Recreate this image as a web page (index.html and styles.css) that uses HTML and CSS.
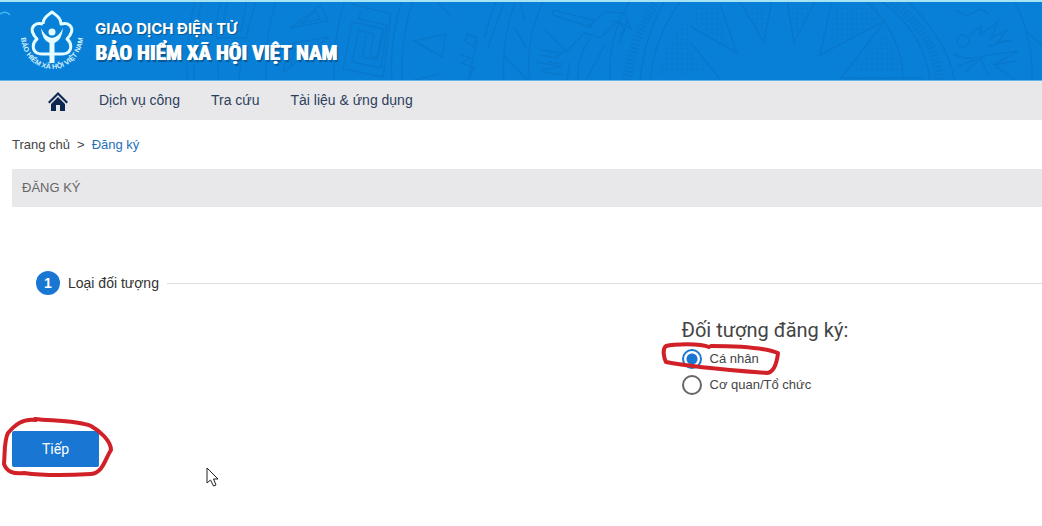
FILE: index.html
```html
<!DOCTYPE html>
<html lang="vi">
<head>
    <meta charset="UTF-8">
    <meta name="viewport" content="width=device-width, initial-scale=1.0">
    <title>Đăng ký - Bảo hiểm xã hội Việt Nam</title>
    <link rel="stylesheet" href="styles.css">
</head>
<body>

<!-- Banner -->
<header class="banner">
    <!-- Hoa văn trống đồng -->
    <svg class="banner-pattern" viewBox="0 0 1042 78" preserveAspectRatio="xMinYMin slice" aria-hidden="true">
        <defs>
            <pattern id="dots" width="5" height="5" patternUnits="userSpaceOnUse">
                <circle cx="2" cy="2" r="1.4"/>
            </pattern>
        </defs>
        <path class="wave" d="M0 12q6-4 10 1"/>
        <g class="lines">
            <path d="M195-2q-10 40-8 82M202-2q-10 40-8 82M222-2q-8 20-5 38h29q4-16 10-38M228-2q-5 18-4 31h17q2-12 6-31M219 46q-2 18 0 34M224 46h18l-3 34M276-2q-12 40-10 82M290 26l31-23 7 16zM300 22l16-13 4 8zM283 70l6-28 40-7zM290 65l5-18 22-4zM345-2q-13 40-11 82"/>
            <path d="M352 2l39 10-8 63-40-8 9-47 31 7-7 31-14-3 4-21M361 10l-3 7 29 6-6 43-29-6 7-32 15 4-4 22 8 2 6-29-30-7"/>
            <path d="M402-2q-13 40-10 82M413-2q-13 40-11 82M414 39l32-7-4 23zM436-2l15 17M414 78l25-6M478 38q-7 20-9 42M505-2l-17 47M496-2l-12 38M515 0q-14 40-11 80M514 25l13 22M505 55l23 24M520 0l5 20"/>
            <path d="M544-2q-20 40-14 82M553 8l40 10-2 7-38-12zM545 28l21 22 18-19 17 5 16-17 14 8-6-16-20-1-18 15M590 36q-14 22-12 44M548 60l15 2M542 70l21 3M570 60l-3 18M605 42l-18 35M612 19q18 5 8 15M628 18l-9 24"/>
            <path d="M631-2q-24 36-21 82M665-2q-22 40-25 82M682-2q-28 36-32 82M690 24l47 27-17-49M690 40l30 37M739-2l25 42 8-42M787-2l7 42 22-42M832-2l-12 55 66-35M882 23l-41 53h82M865-2q38 34 38 82M880-2q46 34 50 82M906-2q42 40 49 82M1014-2q20 40 18 82M1025 28l17 15"/>
            <circle cx="963" cy="39" r="6"/>
            <path d="M969 34l12-10-1 9 18-14-7 17 16-8-9 12 14-2-24 6M953 52q16 8 35 1l30-4-24 14 22-4M955 8l12 6 14-7 8 5M957 64l18-6M966 70l14-14 10 20M990 60l25 18"/>
            <path d="M467 32l10 4-4 9-8-6zM460 52l10 4-8 5 12 5-6 12M541 48l20 3-4 5-17-3M537 60l24 5-20 3"/>
        </g>
        <g class="bands">
            <path d="M655 2q-23 35-28 78M892 0q44 33 48 80"/>
        </g>
        <path fill="url(#dots)" opacity=".5" d="M694 2h25l8 40-35-21zM742 2h24l-3 31zM791 2h22l-18 30zM836 2h38l8 14-54 30zM884 30q16 20 18 41h-50zM690 48l15 22h-15zM674 30l16-15v57h-34z"/>
    </svg>

    <a href="#" class="brand">
        <svg class="logo" viewBox="0 0 64 66" role="img" aria-label="Bảo hiểm xã hội Việt Nam">
            <defs><path id="ring" d="M1 26A31 33 0 0 0 63 26"/></defs>
            <path class="flower" d="M23 14C23 8 27 6 32 2C37 6 41 8 41 14C49 12 53 17 51.500 22C50.500 25.500 49 27 47 29C52 33 52 40 47 43C44 44.500 40 44 34 44M23 14C15 12 11 17 12.500 22C13.500 25.500 15 27 17 29C12 33 12 40 17 43C20 44.500 24 44 30 44"/>
            <path class="figure" d="M21 18Q22 30 29.500 33V53H34.500V33Q42 30 43 18Q39 27 32 28Q25 27 21 18Z"/>
            <circle class="figure" cx="32" cy="22" r="3.500"/>
            <text class="ring-text"><textPath href="#ring" startOffset="50%">BẢO HIỂM XÃ HỘI VIỆT NAM</textPath></text>
        </svg>
        <span class="brand-text">
            <span class="brand-small">GIAO DỊCH ĐIỆN TỬ</span>
            <span class="brand-large">BẢO HIỂM XÃ HỘI VIỆT NAM</span>
        </span>
    </a>
</header>

<!-- Menu chính -->
<nav class="main-nav">
    <a href="#" class="home" aria-label="Trang chủ">
        <svg viewBox="0 0 20 19" width="20" height="19">
            <path d="M0 10L10 0L20 10L18.500 11.500L10 3L1.500 11.500Z"/>
            <path d="M3 12L10 5L17 12V19H12V13H8V19H3Z"/>
        </svg>
    </a>
    <a href="#">Dịch vụ công</a>
    <a href="#">Tra cứu</a>
    <a href="#">Tài liệu &amp; ứng dụng</a>
</nav>

<main class="content">
    <div class="breadcrumb">
        <a href="#">Trang chủ</a>
        <span>&gt;</span>
        <a href="#" class="current">Đăng ký</a>
    </div>

    <h1 class="page-title">ĐĂNG KÝ</h1>

    <div class="step">
        <span class="step-number">1</span>
        <span class="step-label">Loại đối tượng</span>
        <span class="step-line"></span>
    </div>

    <form>
        <fieldset class="subject">
            <legend>Đối tượng đăng ký:</legend>
            <div class="option">
                <input type="radio" name="subject" id="personal" checked>
                <label for="personal">Cá nhân</label>
                <svg class="mark mark-option" viewBox="0 0 120 36" aria-hidden="true">
                    <path d="M48 6C39 2 12 3 5 5C1 8 3 17 5 21C24 25 80 30 106 32C114 31 116 21 117 12C104 7 80 5 50 5"/>
                </svg>
            </div>
            <div class="option">
                <input type="radio" name="subject" id="company">
                <label for="company">Cơ quan/Tổ chức</label>
            </div>
        </fieldset>
        <div class="actions">
            <button type="submit" class="next-button">Tiếp</button>
            <svg class="mark mark-button" viewBox="0 0 114 62" aria-hidden="true">
                <path d="M36 4C22 2 14 10 8 17C4 24 5 37 4 48C7 56 13 58 24 57C45 60 75 59 91 58C103 57 105 43 111 34C111 25 100 15 91 10C76 4 52 5 35 3"/>
            </svg>
            <!-- Con trỏ chuột -->
            <svg class="pointer" viewBox="0 0 13 20" aria-hidden="true">
                <path d="M1 1V16L4.500 13L7.500 19L10 18L7.500 12H12Z"/>
            </svg>
        </div>
    </form>
</main>

</body>
</html>
```
FILE: styles.css
```css
* {
    box-sizing: border-box;
}

body {
    margin: 0;
    min-height: 100vh;
    background: #fff;
    color: #444;
    font-family: "Liberation Sans", Arial, sans-serif;
    font-size: 14px;
    line-height: 20px;
}

a {
    color: inherit;
    text-decoration: none;
}

/* Banner */
.banner {
    position: relative;
    display: flex;
    align-items: center;
    height: 81px;
    padding: 4px 0 0 20px;
    background: #0980d7;
    border-top: 2px solid #a5e3f5;
    border-bottom: 1px solid #62b5e5;
    overflow: hidden;
}

.banner-pattern {
    position: absolute;
    top: 0;
    left: 0;
    width: 100%;
    height: 100%;
}

.banner-pattern .lines,
.banner-pattern .wave {
    fill: none;
    stroke: #0878cc;
    stroke-width: 1.5;
}

.banner-pattern .wave {
    stroke: #43b6ee;
}

.banner-pattern .bands {
    fill: none;
    stroke: #087acf;
    stroke-width: 9;
    stroke-dasharray: 2 2;
}

#dots circle {
    fill: #0874c8;
}

.brand {
    position: relative;
    display: flex;
    align-items: center;
    gap: 11px;
    color: #fff;
}

.logo {
    width: 64px;
    height: 66px;
    overflow: visible;
}

.flower {
    fill: none;
    stroke: #e4fbff;
    stroke-width: 3;
    stroke-linejoin: round;
}

.figure {
    fill: #e4fbff;
}

.ring-text {
    fill: #d5f3ff;
    font-size: 7px;
    font-weight: bold;
    text-anchor: middle;
}

.brand-text {
    display: flex;
    flex-direction: column;
    font-weight: bold;
    white-space: nowrap;
}

.brand-small {
    font-family: Inter, sans-serif;
    font-size: 15px;
    line-height: 20px;
    text-shadow: 1px 1px 1px #0b5590;
}

.brand-large {
    font-family: "Liberation Sans Narrow", "Roboto Condensed", "Liberation Sans", sans-serif;
    font-size: 21px;
    line-height: 28px;
    text-shadow: 1px 0 #fff, 2px 2px 1px #0b5590;
}

/* Menu chính */
.main-nav {
    display: flex;
    align-items: center;
    gap: 31px;
    height: 39px;
    padding: 0 0 2px 48px;
    background: #e8e8eb;
    color: #2d3f5c;
}

.home {
    height: 19px;
    margin-top: 4px;
}

.home svg {
    display: block;
    fill: #0c2750;
}

/* Nội dung */
.content {
    padding: 15px 0 60px 12px;
}

.breadcrumb {
    display: flex;
    gap: 7px;
    font-size: 13px;
}

.breadcrumb .current {
    color: #2470b5;
}

.page-title {
    margin: 14px 0 64px;
    padding: 9px 10px;
    background: #e8e8ea;
    color: #666;
    font-size: 13px;
    font-weight: normal;
    line-height: 20px;
}

.step {
    display: flex;
    align-items: center;
    gap: 8px;
    padding-left: 24px;
    color: #333;
}

.step-number {
    width: 24px;
    height: 24px;
    border-radius: 50%;
    background: #1976d2;
    color: #fff;
    font-weight: bold;
    line-height: 24px;
    text-align: center;
}

.step-line {
    flex: 1;
    border-top: 1px solid #ddd;
}

.subject {
    margin: 23px 0 0 65%;
    padding: 0;
    border: 0;
}

.subject legend {
    padding: 0 0 4px;
    font-family: Roboto, sans-serif;
    font-size: 20px;
    line-height: 24px;
}

.option {
    position: relative;
    display: flex;
    align-items: center;
    gap: 8px;
    height: 26px;
    font-size: 13px;
}

.option input {
    appearance: none;
    width: 20px;
    height: 20px;
    margin: 0;
    border: 2px solid #666;
    border-radius: 50%;
}

.option input:checked {
    border-color: #1976d2;
    background: radial-gradient(circle, #1976d2 5px, transparent 6px);
}

.actions {
    position: relative;
    margin-top: 33px;
}

.next-button {
    display: block;
    width: 87px;
    height: 36px;
    padding: 0;
    border: 0;
    border-radius: 2px;
    background: #1976d2;
    color: #fff;
    font-family: Roboto, sans-serif;
    font-size: 14px;
}

/* Nét khoanh đỏ */
.mark {
    position: absolute;
    fill: none;
    stroke: #d12027;
    stroke-width: 4;
    stroke-linecap: round;
    stroke-linejoin: round;
    pointer-events: none;
}

.mark-option {
    top: -5px;
    left: -21px;
    width: 120px;
    height: 36px;
}

.mark-button {
    top: -15px;
    left: -12px;
    width: 114px;
    height: 62px;
}

.pointer {
    position: absolute;
    top: 36px;
    left: 194px;
    width: 13px;
    height: 20px;
    fill: #fff;
    stroke: #222;
}
```
